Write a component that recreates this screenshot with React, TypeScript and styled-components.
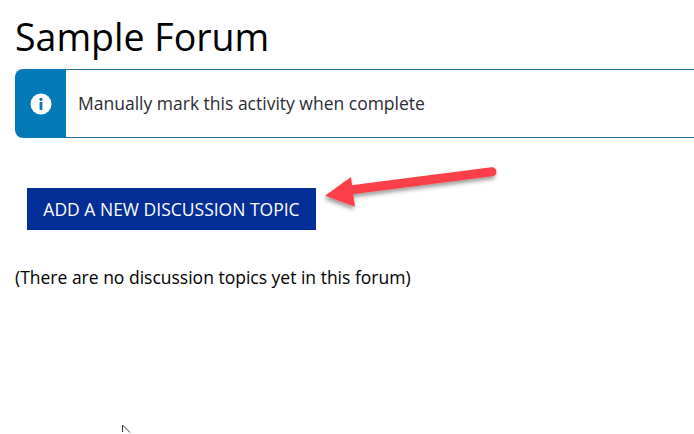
import React from 'react'
import styled, { createGlobalStyle } from 'styled-components'

const GlobalStyle = createGlobalStyle`
  html, body {
    margin: 0;
    padding: 0;
    background: #fff;
    overflow: hidden;
  }
  body {
    font-family: "Open Sans", "Noto Sans", sans-serif;
  }
`

const Page = styled.div`
  position: relative;
  width: 694px;
  height: 434px;
  overflow: hidden;
  padding: 11px 0 0 15px;
  box-sizing: border-box;
`

const Title = styled.h1`
  margin: 0;
  font-size: 37.5px;
  line-height: 52px;
  font-weight: 400;
  color: #000;
`

const Notice = styled.div`
  display: flex;
  align-items: stretch;
  margin-top: 6px;
  width: 720px;
  height: 69px;
`

const NoticeIcon = styled.div`
  flex: 0 0 51px;
  display: flex;
  align-items: center;
  justify-content: center;
  background: #0379b8;
  border-radius: 8px 0 0 8px;
`

const NoticeBody = styled.div`
  flex: 1;
  display: flex;
  align-items: center;
  padding: 0 0 2px 12px;
  border-top: 1px solid #2a6f9b;
  border-bottom: 1px solid #2a6f9b;
  font-size: 17.5px;
  color: #2b2b33;
`

const AddButton = styled.button`
  display: block;
  margin: 50px 0 0 12px;
  width: 289px;
  height: 42px;
  padding: 0;
  border: 0;
  background: #032e96;
  color: #fff;
  font-family: inherit;
  font-size: 17.5px;
  text-align: center;
`

const EmptyText = styled.p`
  margin: 35px 0 0;
  font-size: 17.5px;
  line-height: 24px;
  color: #000;
`

const Arrow = styled.svg`
  position: absolute;
  left: 316px;
  top: 158px;
  width: 190px;
  height: 60px;
  overflow: visible;
`

const Cursor = styled.svg`
  position: absolute;
  left: 120px;
  top: 424px;
  width: 14px;
  height: 10px;
`

const App = () => {
  return (
    <Page>
      <GlobalStyle />
      <Title>Sample Forum</Title>
      <Notice>
        <NoticeIcon>
          <svg width="22" height="22" viewBox="0 0 22 22">
            <circle cx="11" cy="11" r="10.5" fill="#fff" />
            <rect x="9.6" y="9" width="2.8" height="8" fill="#0379b8" />
            <circle cx="11" cy="6.3" r="1.6" fill="#0379b8" />
          </svg>
        </NoticeIcon>
        <NoticeBody>Manually mark this activity when complete</NoticeBody>
      </Notice>
      <AddButton>ADD A NEW DISCUSSION TOPIC</AddButton>
      <EmptyText>(There are no discussion topics yet in this forum)</EmptyText>
      <Arrow viewBox="0 0 190 60">
        <defs>
          <filter id="arrow-shadow" x="-10%" y="-30%" width="120%" height="170%">
            <feDropShadow dx="-1" dy="3" stdDeviation="2" floodColor="#000" floodOpacity="0.4" />
          </filter>
        </defs>
        <g filter="url(#arrow-shadow)" fill="#fb4149">
          <path d="M176 13.7 L30 32.5" stroke="#fb4149" strokeWidth="9" strokeLinecap="round" />
          <path d="M9 37.7 L35 19 L39 48.7 Z" />
        </g>
      </Arrow>
      <Cursor viewBox="0 0 14 10">
        <path d="M2.5 1 V8 M2.5 1 L10 8.5" fill="none" stroke="#33333d" strokeWidth="1" />
      </Cursor>
    </Page>
  )
}

export default App
